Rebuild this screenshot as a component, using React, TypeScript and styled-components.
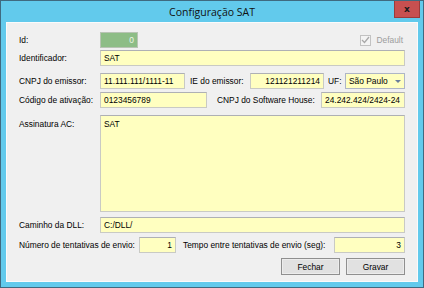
import React from 'react'
import styled, { createGlobalStyle } from 'styled-components'

const GlobalStyle = createGlobalStyle`
  html, body {
    margin: 0;
    padding: 0;
    background: #ffffff;
  }
  body {
    font-family: "Liberation Sans", Arial, sans-serif;
    font-size: 8.4px;
    color: #000;
  }
`

const StyledWindow = styled.div`
  width: 424px;
  height: 288px;
  box-sizing: border-box;
  border: 1px solid #3f6a80;
  background: #62caec;
  display: flex;
  flex-direction: column;
  padding: 0 5px 5px 5px;
`

const StyledTitleBar = styled.div`
  position: relative;
  height: 21px;
  flex: none;
  display: flex;
  align-items: center;
  justify-content: center;
  font-family: "Open Sans", "Noto Sans", sans-serif;
  font-size: 10.5px;
  color: #111;
`

const StyledClose = styled.div`
  position: absolute;
  right: -2px;
  top: 0;
  width: 26px;
  height: 17px;
  box-sizing: border-box;
  background: #c75050;
  border: 1px solid #9b3b3b;
  border-top: none;
  display: flex;
  align-items: center;
  justify-content: center;
  color: #1a1a1a;
  font-family: "DejaVu Sans", sans-serif;
  font-weight: bold;
  font-size: 9px;
`

const StyledClient = styled.div`
  flex: 1;
  background: #f0f0f0;
  border: 1px solid #fbfbfb;
  padding: 9px 12px 0 12px;
  display: flex;
  flex-direction: column;
`

const StyledRow = styled.div<{ $gap: number; $height?: number }>`
  display: flex;
  align-items: ${(p) => (p.$height ? 'flex-start' : 'center')};
  height: ${(p) => p.$height ?? 16}px;
  margin-top: ${(p) => p.$gap}px;
`

const StyledLabel = styled.div<{ $width: number; $top?: boolean }>`
  width: ${(p) => p.$width}px;
  flex: none;
  white-space: nowrap;
  padding-top: ${(p) => (p.$top ? 4 : 0)}px;
`

const StyledField = styled.div<{ $width?: number; $right?: boolean; $height?: number }>`
  box-sizing: border-box;
  width: ${(p) => (p.$width ? `${p.$width}px` : 'auto')};
  flex: ${(p) => (p.$width ? 'none' : '1')};
  height: ${(p) => p.$height ?? 16}px;
  background: #ffffc0;
  border: 1px solid #c9cac4;
  border-top-color: #aeb0b4;
  padding: ${(p) => (p.$height ? '3px 3px' : '0 3px')};
  display: flex;
  align-items: ${(p) => (p.$height ? 'flex-start' : 'center')};
  justify-content: ${(p) => (p.$right ? 'flex-end' : 'flex-start')};
  white-space: nowrap;
  overflow: hidden;
`

const StyledIdField = styled(StyledField)`
  background: #8dbd86;
  color: #eef6e8;
  border-color: #b8c4b4;
`

const StyledSelect = styled(StyledField)`
  justify-content: space-between;
  padding-right: 3px;
  border-color: #aeb6c6;
`

const StyledCheckWrap = styled.div`
  margin-left: auto;
  margin-right: 2px;
  display: flex;
  align-items: center;
  gap: 5px;
  color: #9c9c9c;
`

const StyledCheckBox = styled.div`
  width: 11px;
  height: 11px;
  box-sizing: border-box;
  border: 1px solid #c2c2c2;
  background: #f4f4f4;
  display: flex;
  align-items: center;
  justify-content: center;
`

const StyledButtons = styled.div`
  display: flex;
  justify-content: flex-end;
  gap: 6px;
  margin-top: 5px;
`

const StyledButton = styled.div`
  box-sizing: border-box;
  width: 59px;
  height: 17px;
  border: 1px solid #8f8f8f;
  background: #e1e1e1;
  box-shadow: inset 0 0 0 1px #ececec;
  display: flex;
  align-items: center;
  justify-content: center;
`

const Arrow = () => (
  <svg width="6" height="3" viewBox="0 0 6 3">
    <path d="M0 0 H6 L3 3 Z" fill="#6a7e9c" />
  </svg>
)

const Check = () => (
  <svg width="9" height="8" viewBox="0 0 9 8">
    <path d="M1 4 L3.5 6.5 L8 1" stroke="#a8a8a8" strokeWidth="1.3" fill="none" />
  </svg>
)

export default function App() {
  return (
    <>
      <GlobalStyle />
      <StyledWindow>
        <StyledTitleBar>
          Configuração SAT
          <StyledClose>x</StyledClose>
        </StyledTitleBar>
        <StyledClient>
          <StyledRow $gap={0}>
            <StyledLabel $width={81}>Id:</StyledLabel>
            <StyledIdField $width={38} $right>0</StyledIdField>
            <StyledCheckWrap>
              <StyledCheckBox>
                <Check />
              </StyledCheckBox>
              Default
            </StyledCheckWrap>
          </StyledRow>
          <StyledRow $gap={2}>
            <StyledLabel $width={81}>Identificador:</StyledLabel>
            <StyledField>SAT</StyledField>
          </StyledRow>
          <StyledRow $gap={7}>
            <StyledLabel $width={81}>CNPJ do emissor:</StyledLabel>
            <StyledField $width={85}>11.111.111/1111-11</StyledField>
            <StyledLabel $width={60} style={{ marginLeft: 5 }}>IE do emissor:</StyledLabel>
            <StyledField $width={74} $right>121121211214</StyledField>
            <StyledLabel $width={17} style={{ marginLeft: 4 }}>UF:</StyledLabel>
            <StyledSelect $width={60}>
              São Paulo
              <Arrow />
            </StyledSelect>
          </StyledRow>
          <StyledRow $gap={3}>
            <StyledLabel $width={81}>Código de ativação:</StyledLabel>
            <StyledField $width={107}>0123456789</StyledField>
            <StyledLabel $width={104} style={{ marginLeft: 10 }}>CNPJ do Software House:</StyledLabel>
            <StyledField $width={84}>24.242.424/2424-24</StyledField>
          </StyledRow>
          <StyledRow $gap={7} $height={97}>
            <StyledLabel $width={81} $top>Assinatura AC:</StyledLabel>
            <StyledField $height={97}>SAT</StyledField>
          </StyledRow>
          <StyledRow $gap={5}>
            <StyledLabel $width={81}>Caminho da DLL:</StyledLabel>
            <StyledField>C:/DLL/</StyledField>
          </StyledRow>
          <StyledRow $gap={4}>
            <StyledLabel $width={120}>Número de tentativas de envio:</StyledLabel>
            <StyledField $width={37} $right>1</StyledField>
            <StyledLabel $width={151} style={{ marginLeft: 7 }}>Tempo entre tentativas de envio (seg):</StyledLabel>
            <StyledField $width={71} $right>3</StyledField>
          </StyledRow>
          <StyledButtons>
            <StyledButton>Fechar</StyledButton>
            <StyledButton>Gravar</StyledButton>
          </StyledButtons>
        </StyledClient>
      </StyledWindow>
    </>
  )
}
